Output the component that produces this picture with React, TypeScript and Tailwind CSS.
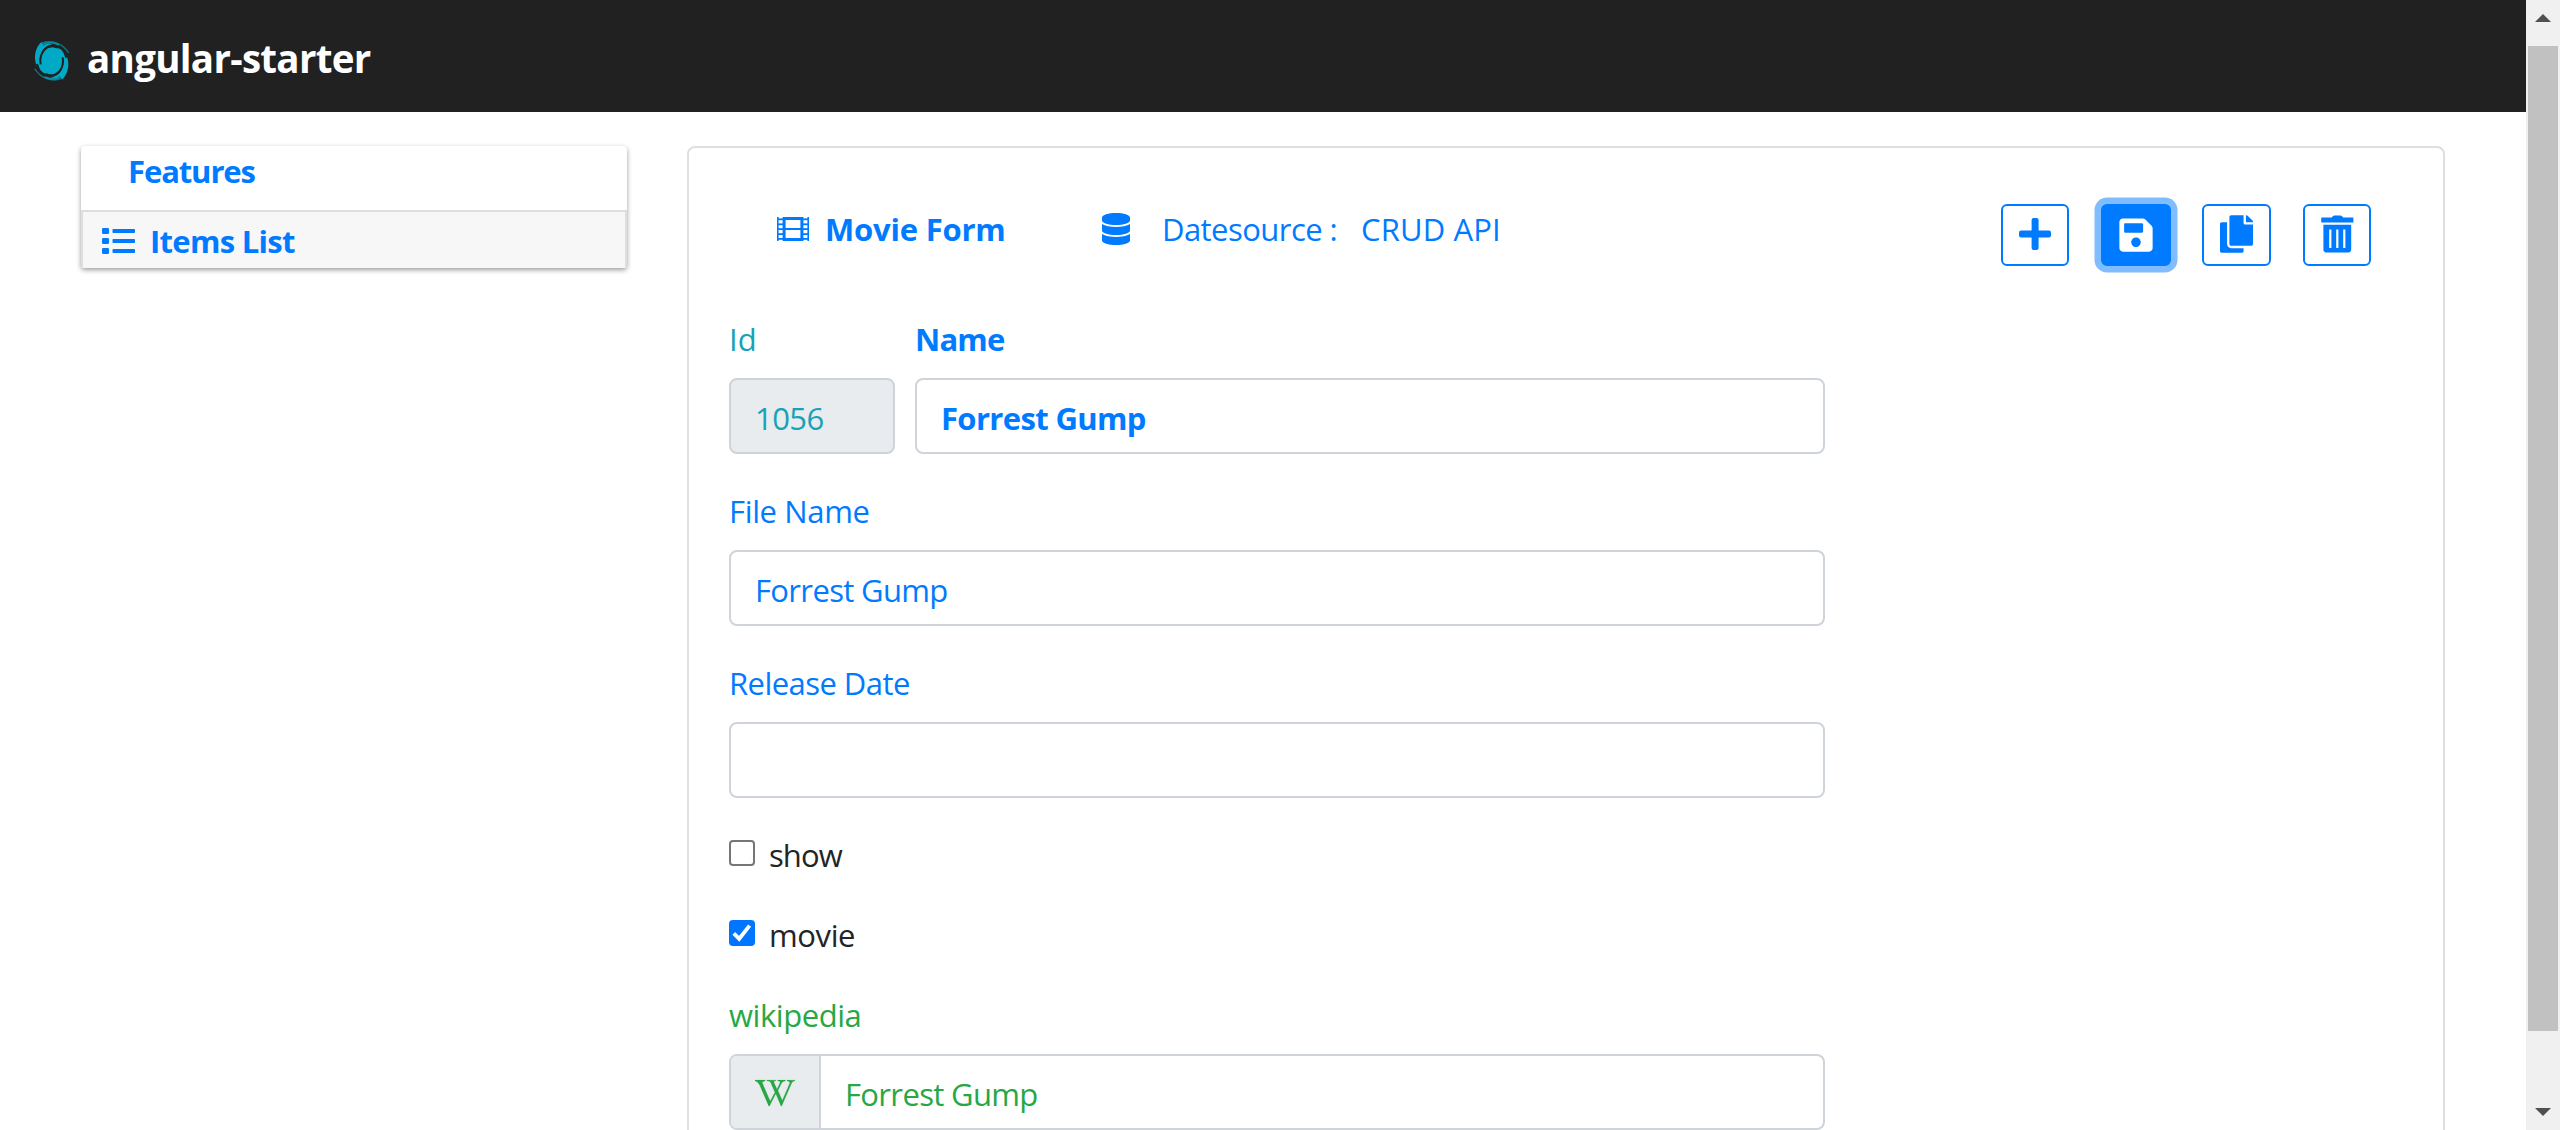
import React from "react";
import type { ReactNode } from "react";
import { FaDatabase, FaSave, FaCopy, FaWikipediaW } from "react-icons/fa";

/* Half of the swirl; the other half is the same drawing turned by 180 degrees. */
function SwirlArm() {
  return (
    <>
      <path
        d="M59 25 C41 25 25 42 25 66 C20 40 33 14 62 10 C48 6 40 8 34 14 L28 3 C14 16 6 38 10 60 C13 80 24 92 36 98 L59 94 Z"
        fill="#00a9c5"
      />
      <path d="M30 6 C58 -4 92 6 110 36" fill="none" stroke="#00a9c5" strokeWidth="4" opacity="0.6" />
      <path d="M30 12 C44 2 66 4 80 12" fill="none" stroke="#00a9c5" strokeWidth="5" opacity="0.8" />
    </>
  );
}

function Logo() {
  return (
    <svg width="40" height="40" viewBox="0 0 120 120" className="mt-[10px] shrink-0">
      <SwirlArm />
      <g transform="rotate(180 59 59.5)">
        <SwirlArm />
      </g>
      <ellipse cx="59" cy="59.5" rx="35" ry="41" fill="#00a9c5" />
      <path d="M26 70 C21 42 36 17 62 15 C84 14 98 28 103 50" fill="none" stroke="#212121" strokeWidth="6" />
      <path d="M92 49 C97 77 82 102 56 104 C34 105 20 91 15 69" fill="none" stroke="#212121" strokeWidth="6" />
    </svg>
  );
}

function ListIcon() {
  return (
    <svg width="34" height="26" viewBox="0 0 34 26" fill="currentColor" className="shrink-0">
      {[0, 10, 20].map((y) => (
        <g key={y}>
          <rect x="0" y={y} width="7" height="6" rx="1.2" />
          <rect x="10.5" y={y + 1} width="22.5" height="4" rx="0.8" />
        </g>
      ))}
    </svg>
  );
}

function FilmIcon() {
  return (
    <svg width="32" height="24" viewBox="0 0 32 24" fill="currentColor" className="shrink-0">
      <rect x="0" y="0" width="1.6" height="24" />
      <rect x="5.6" y="0" width="3" height="24" />
      <rect x="23.4" y="0" width="3" height="24" />
      <rect x="30.4" y="0" width="1.6" height="24" />
      <rect x="6" y="0" width="20" height="3" />
      <rect x="6" y="21" width="20" height="3" />
      <rect x="6" y="11" width="20" height="2" />
      {[1.4, 6.4, 11.2, 16.2, 21].map((y) => (
        <g key={y}>
          <rect x="0" y={y} width="6.5" height="1.8" />
          <rect x="25.5" y={y} width="6.5" height="1.8" />
        </g>
      ))}
    </svg>
  );
}

function PlusIcon() {
  return (
    <svg width="32" height="32" viewBox="0 0 32 32" fill="currentColor">
      <rect x="12.6" y="0" width="7" height="32" rx="2" />
      <rect x="0" y="12.6" width="32" height="7" rx="2" />
    </svg>
  );
}

function TrashIcon() {
  return (
    <svg width="33" height="38" viewBox="0 0 33 38" fill="currentColor">
      <path d="M1 2.6 H10.6 L12 1 Q12.6 0.4 13.4 0.4 H19.4 Q20.2 0.4 20.8 1 L22.2 2.6 H31.6 Q32.4 2.6 32.4 3.4 V7.4 H0.2 V3.4 Q0.2 2.6 1 2.6 Z" />
      <path
        fillRule="evenodd"
        d="M2.4 9.8 H30.2 V34.6 Q30.2 37.4 27.4 37.4 H5.2 Q2.4 37.4 2.4 34.6 Z M8.2 14.4 V33 H10.4 V14.4 Z M15.2 14.4 V33 H17.4 V14.4 Z M22.2 14.4 V33 H24.4 V14.4 Z"
      />
    </svg>
  );
}

const fieldBox = "h-[76px] rounded-[8px] border-2 border-[#ced4da]";

function ActionButton({ children, className }: { children: ReactNode; className: string }) {
  return (
    <button
      className={`flex h-[62px] shrink-0 justify-center rounded-[6px] border-2 border-[#007bff] ${className}`}
    >
      {children}
    </button>
  );
}

function Scrollbar() {
  return (
    <div className="flex h-full w-[34px] shrink-0 flex-col items-center bg-[#f0f0f0]">
      <div className="flex h-[46px] justify-center pt-[14px]">
        <svg width="16" height="8" viewBox="0 0 16 8" fill="#505050">
          <path d="M0 8 L8 0 L16 8 Z" />
        </svg>
      </div>
      <div className="h-[985px] w-[30px] bg-[#c1c1c1]" />
      <svg width="16" height="8" viewBox="0 0 16 8" fill="#505050" className="mt-[77px]">
        <path d="M0 0 L8 8 L16 0 Z" />
      </svg>
    </div>
  );
}

export default function App() {
  return (
    <div className="flex h-[1130px] w-[2560px] overflow-hidden bg-white font-['Open_Sans','Noto_Sans',sans-serif] text-[31px] leading-[48px] whitespace-nowrap text-[#007bff]">
      <div className="flex h-full w-[2526px] shrink-0 flex-col">
        <header className="flex h-[112px] shrink-0 items-center bg-[#212121] pl-[32px]">
          <Logo />
          <span className="mt-[3px] ml-[15px] text-[38.5px] font-bold tracking-[-0.7px] text-white">
            angular-starter
          </span>
        </header>

        <div className="flex flex-1 items-start">
          <nav className="mt-[34px] ml-[81px] flex h-[122px] w-[546px] shrink-0 flex-col rounded-[4px] shadow-[0_2px_5px_rgba(0,0,0,0.4)]">
            <div className="h-[64px] pt-px pl-[47px] font-bold tracking-[-1.1px]">Features</div>
            <div className="flex h-[58px] items-start border-x-2 border-t-2 border-[#dedede] bg-[#f7f7f7] pl-[19px]">
              <div className="mt-[16px]">
                <ListIcon />
              </div>
              <span className="mt-[5px] ml-[14px] font-bold tracking-[-0.7px]">Items List</span>
            </div>
          </nav>

          <main className="mt-[34px] ml-[60px] h-[1100px] w-[1758px] shrink-0 rounded-[8px] border-2 border-[#dfdfdf] pt-[56px] pl-[40px]">
            <div className="flex h-[62px] items-start">
              <div className="mt-[13px] ml-[48px]">
                <FilmIcon />
              </div>
              <span className="mt-px ml-[16px] w-[190px] font-bold tracking-[-0.2px]">Movie Form</span>
              <FaDatabase className="mt-[9px] ml-[87px] h-[32px] w-[28px] shrink-0" />
              <span className="mt-px ml-[32px] w-[199px] tracking-[-0.55px]">Datesource :</span>
              <span className="mt-px w-[640px] tracking-[0.15px]">CRUD API</span>
              <ActionButton className="w-[68px] pt-[12px]">
                <PlusIcon />
              </ActionButton>
              <ActionButton className="ml-[32px] w-[70px] bg-[#007bff] pt-[10px] text-white shadow-[0_0_0_6.5px_#80bdff]">
                <FaSave className="h-[38px] w-[34px]" />
              </ActionButton>
              <ActionButton className="ml-[31px] w-[69px] pt-[9px]">
                <FaCopy className="h-[38px] w-[33px]" />
              </ActionButton>
              <ActionButton className="ml-[32px] w-[68px] pt-[9px]">
                <TrashIcon />
              </ActionButton>
            </div>

            <form className="mt-[49px] flex w-[1096px] flex-col">
              <div className="flex gap-[20px]">
                <div className="w-[166px] text-[#17a2b8]">
                  <div>Id</div>
                  <div className={`mt-[15px] bg-[#e9ecef] pt-[14px] pl-[24px] tracking-[-0.6px] ${fieldBox}`}>
                    1056
                  </div>
                </div>
                <div className="flex-1 font-bold">
                  <div className="tracking-[-0.8px]">Name</div>
                  <div className={`mt-[15px] pt-[14px] pl-[24px] tracking-[-0.65px] ${fieldBox}`}>
                    Forrest Gump
                  </div>
                </div>
              </div>

              <div className="mt-[33px] tracking-[-0.35px]">File Name</div>
              <div className={`mt-[15px] pt-[14px] pl-[24px] tracking-[-0.65px] ${fieldBox}`}>Forrest Gump</div>

              <div className="mt-[33px] tracking-[-0.55px]">Release Date</div>
              <div className={`mt-[15px] ${fieldBox}`} />

              <div className="mt-[33px] flex text-[#212529]">
                <span className="mt-[9px] size-[26px] rounded-[4px] border-2 border-[#767676] bg-white" />
                <span className="ml-[14px] tracking-[-0.9px]">show</span>
              </div>

              <div className="mt-[32px] flex text-[#212529]">
                <span className="mt-[9px] flex size-[26px] items-center justify-center rounded-[4px] bg-[#0075ff]">
                  <svg width="26" height="26" viewBox="0 0 26 26">
                    <path d="M4.8 13.4 L10.2 18.8 L20.6 5.6" fill="none" stroke="#fff" strokeWidth="3.8" />
                  </svg>
                </span>
                <span className="ml-[14px] tracking-[-0.4px]">movie</span>
              </div>

              <div className="mt-[32px] tracking-[-0.45px] text-[#28a745]">wikipedia</div>
              <div className={`mt-[15px] flex overflow-hidden text-[#28a745] ${fieldBox}`}>
                <div className="flex h-full w-[90px] justify-center border-r-2 border-[#ced4da] bg-[#e9ecef] pt-[17px]">
                  <FaWikipediaW className="h-[40px] w-[40px]" stroke="currentColor" strokeWidth="3" />
                </div>
                <span className="pt-[14px] pl-[24px] tracking-[-0.65px]">Forrest Gump</span>
              </div>
            </form>
          </main>
        </div>
      </div>
      <Scrollbar />
    </div>
  );
}
